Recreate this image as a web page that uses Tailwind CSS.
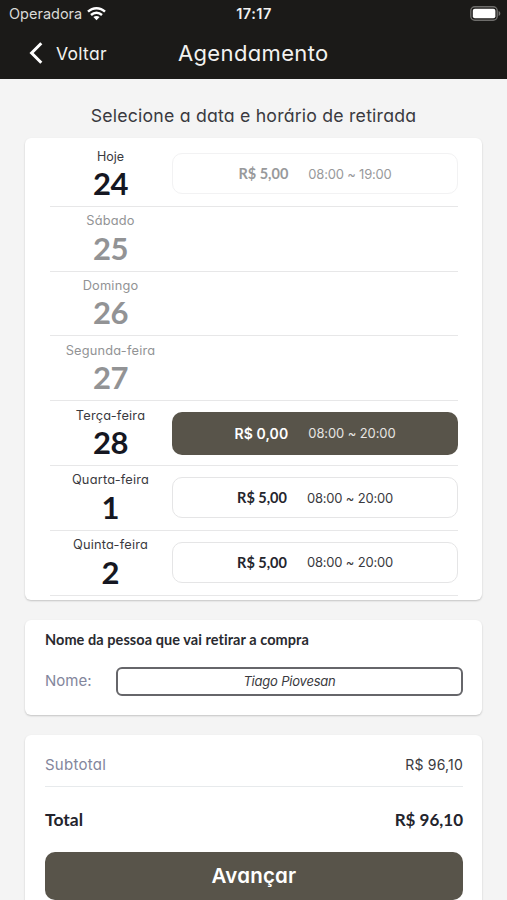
<!DOCTYPE html>
<html lang="pt-BR">
<head>
<meta charset="utf-8">
<title>Agendamento</title>
<script src="https://cdn.jsdelivr.net/npm/@tailwindcss/browser@4"></script>
</head>
<body class="w-[507px] h-[900px] overflow-hidden bg-[#f4f4f4] font-['Inter',sans-serif] text-[#3a3a40] [font-feature-settings:'cv11']">
<header class="h-[79px] bg-[#1b1a18] text-[#f2f2f0]">
  <div class="h-7 grid grid-cols-3 items-center pl-[9px] pr-[6px]">
    <div class="flex items-center gap-[5px] text-[14.5px] leading-7 text-[#d9d9d7] [font-feature-settings:normal]">
      <span class="tracking-[0px]">Operadora</span>
      <svg class="w-[19px] h-[15px] -mt-[2px]" viewBox="0 0 19 15" fill="none" stroke="#fff" stroke-width="2.4"><path d="M1 5.7C5.8 1 13.2 1 18 5.7M4 9C7.2 6 11.8 6 15 9"/><path d="M6.4 11.1C8.2 9.5 10.8 9.5 12.6 11.1L9.5 14.2Z" fill="#fff" stroke="none"/></svg>
    </div>
    <span class="text-center text-[14.5px] font-semibold tracking-[0.5px] pr-[2px] [font-feature-settings:normal]">17:17</span>
    <svg class="justify-self-end w-[31px] h-[15px] -mt-[2px]" viewBox="0 0 31 15"><rect x=".8" y=".8" width="26.4" height="13.4" rx="4" fill="none" stroke="#6e6d6b" stroke-width="1.4"/><rect x="2.8" y="2.8" width="22.6" height="9.4" rx="2" fill="#fff"/><path d="M28.6 5v5c2.3-.8 2.3-4.2 0-5" fill="#777674"/></svg>
  </div>
  <div class="h-[51px] grid grid-cols-[178px_1fr_179px] items-center">
    <div class="flex items-center gap-[13px] pl-[29px]">
      <svg class="w-[14px] h-[22px] -mt-[2px]" viewBox="0 0 14 22" fill="none" stroke="#fff" stroke-width="3"><path d="M12.3 1.3L2.6 11l9.7 9.7"/></svg>
      <span class="text-[17.5px] leading-6 tracking-[0.3px]">Voltar</span>
    </div>
    <h1 class="text-[22px] leading-6 tracking-[0.35px] whitespace-nowrap pb-[2px]">Agendamento</h1>
  </div>
</header>
<main class="px-[25px]">
  <h2 class="h-[59px] pt-[25px] text-center text-[17.7px] leading-6 tracking-[0.2px] whitespace-nowrap">Selecione a data e horário de retirada</h2>
  <section class="h-[462px] bg-white rounded-md shadow-[0_1px_2px_rgba(0,0,0,0.2)] pl-[25px] pr-6 pt-1">
    <div class="h-[64.8px] flex items-center border-b-[1.5px] border-[#e7e7e8]">
      <div class="w-[122px] pr-[1px] text-center"><p class="text-[12.5px] leading-5">Hoje</p><p class="font-['Lato',sans-serif] font-bold text-[31px] leading-[32px] pb-[2px] tracking-[-0.5px] text-[#151722]">24</p></div>
      <div class="w-[286px] h-[41px] flex items-center justify-center gap-[20px] rounded-[10px] border border-[#f2f2f3] text-[#98999b] text-[13px] tracking-[-0.2px]"><b class="font-['Lato',sans-serif] text-[14.5px] tracking-normal">R$ 5,00</b><span class="pt-px">08:00 ~ 19:00</span></div>
    </div>
    <div class="h-[64.8px] flex items-center border-b-[1.5px] border-[#e7e7e8] text-[#929395]">
      <div class="w-[122px] pr-[1px] text-center"><p class="text-[12.8px] leading-5 tracking-[0.2px] -mt-px mb-px">Sábado</p><p class="font-['Lato',sans-serif] font-bold text-[31px] leading-[32px] pb-[2px] tracking-[-0.5px]">25</p></div>
    </div>
    <div class="h-[64.8px] flex items-center border-b-[1.5px] border-[#e7e7e8] text-[#929395]">
      <div class="w-[122px] pr-[1px] text-center"><p class="text-[12.8px] leading-5 tracking-[0.2px]">Domingo</p><p class="font-['Lato',sans-serif] font-bold text-[31px] leading-[32px] pb-[2px] tracking-[-0.5px]">26</p></div>
    </div>
    <div class="h-[64.8px] flex items-center border-b-[1.5px] border-[#e7e7e8] text-[#929395]">
      <div class="w-[122px] pr-[1px] text-center"><p class="text-[12.8px] leading-5 tracking-[0.2px]">Segunda-feira</p><p class="font-['Lato',sans-serif] font-bold text-[31px] leading-[32px] pb-[2px] tracking-[-0.5px]">27</p></div>
    </div>
    <div class="h-[64.8px] flex items-center border-b-[1.5px] border-[#e7e7e8]">
      <div class="w-[122px] pr-[1px] text-center"><p class="text-[12.8px] leading-5 tracking-[0.2px]">Terça-feira</p><p class="font-['Lato',sans-serif] font-bold text-[31px] leading-[32px] pb-[2px] tracking-[-0.5px] text-[#151722]">28</p></div>
      <div class="w-[286px] h-[43px] flex items-center justify-center gap-[20px] rounded-[10px] bg-[#58544a] text-[#e6e5e2] text-[13px] tracking-[-0.1px]"><b class="text-white text-[14px] font-semibold tracking-[0.1px]">R$ 0,00</b><span class="pt-px">08:00 ~ 20:00</span></div>
    </div>
    <div class="h-[64.8px] flex items-center border-b-[1.5px] border-[#e7e7e8]">
      <div class="w-[122px] pr-[1px] text-center"><p class="text-[12.8px] leading-5 tracking-[0.2px] -mt-px mb-px">Quarta-feira</p><p class="font-['Lato',sans-serif] font-bold text-[31px] leading-[32px] pb-[2px] text-[#151722]">1</p></div>
      <div class="w-[286px] h-[41px] flex items-center justify-center gap-[20px] rounded-[10px] border border-[#e5e5e6] text-[13px] tracking-[-0.2px]"><b class="font-['Lato',sans-serif] text-[14.5px] tracking-normal text-[#24252d]">R$ 5,00</b><span class="pt-px">08:00 ~ 20:00</span></div>
    </div>
    <div class="h-[64.8px] flex items-center border-b-[1.5px] border-[#e7e7e8]">
      <div class="w-[122px] pr-[1px] text-center"><p class="text-[12.8px] leading-5 tracking-[0.2px] -mt-px mb-px">Quinta-feira</p><p class="font-['Lato',sans-serif] font-bold text-[31px] leading-[32px] pb-[2px] text-[#151722]">2</p></div>
      <div class="w-[286px] h-[41px] flex items-center justify-center gap-[20px] rounded-[10px] border border-[#e5e5e6] text-[13px] tracking-[-0.2px]"><b class="font-['Lato',sans-serif] text-[14.5px] tracking-normal text-[#24252d]">R$ 5,00</b><span class="pt-px">08:00 ~ 20:00</span></div>
    </div>
  </section>
  <section class="mt-5 h-[95px] bg-white rounded-md shadow-[0_1px_2px_rgba(0,0,0,0.2)] px-5 pt-[9px]">
    <h3 class="font-['Lato',sans-serif] font-bold text-[14.5px] leading-[22px] tracking-[0.06px] text-[#292a2f] [font-variant-ligatures:none]">Nome da pessoa que vai retirar a compra</h3>
    <div class="mt-4 w-[418px] flex items-center justify-between">
      <span class="text-[15px] text-[#83869c]">Nome:</span>
      <div class="w-[347px] h-[29px] rounded-md border-2 border-[#66666a] flex items-center justify-center text-[13px] tracking-[-0.2px] italic">Tiago Piovesan</div>
    </div>
  </section>
  <section class="mt-5 h-[180px] bg-white rounded-md shadow-[0_1px_2px_rgba(0,0,0,0.2)] px-5 pt-[9px]">
    <div class="h-[43px] w-[418px] flex items-center justify-between border-b-[1.5px] border-[#e7eaec]"><span class="text-[15px] tracking-[0.25px] text-[#83869c]">Subtotal</span><span class="text-[14px] tracking-[0.2px] pb-px">R$ 96,10</span></div>
    <div class="h-[65px] w-[418px] flex items-center justify-between font-['Lato',sans-serif] font-bold text-[17.5px] text-[#23242d]"><span class="pt-px">Total</span><span class="text-[17px]">R$ 96,10</span></div>
    <button class="block w-[418px] h-[48px] rounded-[10px] bg-[#58544a] text-white text-[20.5px] tracking-[0.2px] font-semibold">Avançar</button>
  </section>
</main>
</body>
</html>
